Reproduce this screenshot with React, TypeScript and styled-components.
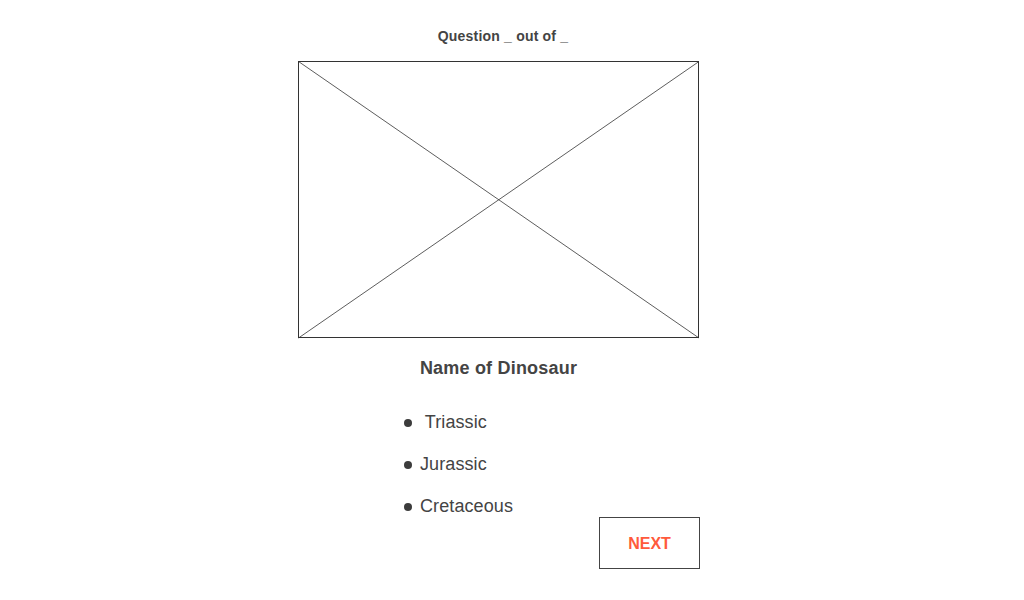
import React from "react";
import styled, { createGlobalStyle } from "styled-components";

const GlobalStyle = createGlobalStyle`
  html, body {
    margin: 0;
    padding: 0;
    background: #ffffff;
  }
  body {
    font-family: "Liberation Sans", Arial, sans-serif;
    color: #444444;
  }
`;

const Page = styled.div`
  width: 1024px;
  height: 600px;
  box-sizing: border-box;
  padding: 28px 0 0 298px;
`;

const Column = styled.div`
  width: 401px;
  display: flex;
  flex-direction: column;
`;

const Counter = styled.div`
  font-size: 14px;
  font-weight: 700;
  line-height: 16px;
  letter-spacing: 0.2px;
  text-align: center;
  padding-left: 9px;
  margin-bottom: 17px;
`;

const Placeholder = styled.div`
  position: relative;
  width: 401px;
  height: 277px;
  box-sizing: border-box;
  border: 1px solid #333333;

  svg {
    position: absolute;
    inset: -1px;
    width: calc(100% + 3px);
    height: calc(100% + 3px);
    overflow: visible;
  }
`;

const DinoName = styled.div`
  margin-top: 19px;
  font-size: 18px;
  font-weight: 700;
  line-height: 22px;
  letter-spacing: 0.2px;
  text-align: center;
`;

const Options = styled.ul`
  list-style: none;
  margin: 33px 0 0 106px;
  padding: 0;
  display: flex;
  flex-direction: column;
  gap: 21px;
`;

const Option = styled.li`
  display: flex;
  align-items: center;
  font-size: 18px;
  line-height: 21px;
  letter-spacing: 0.1px;
  white-space: pre;
`;

const Dot = styled.span`
  width: 8px;
  height: 8px;
  border-radius: 50%;
  background: #3c3c3c;
  margin-right: 8px;
  flex: none;
`;

const NextButton = styled.button`
  align-self: flex-end;
  width: 101px;
  height: 52px;
  margin: 0 -1px 0 0;
  padding: 2px 0 0;
  background: #ffffff;
  border: 1px solid #444444;
  border-radius: 0;
  color: #ff5a3c;
  font-family: "Liberation Sans", Arial, sans-serif;
  font-size: 16px;
  font-weight: 700;
  cursor: pointer;
`;

const options = [" Triassic", "Jurassic", "Cretaceous"];

export default function App() {
  return (
    <>
      <GlobalStyle />
      <Page>
        <Column>
          <Counter>Question _ out of _</Counter>
          <Placeholder>
            <svg viewBox="0 0 403 279" preserveAspectRatio="none">
              <line x1="0.5" y1="0.5" x2="402" y2="278" stroke="#333" strokeWidth="0.8" />
              <line x1="402" y1="0.5" x2="0.5" y2="278" stroke="#333" strokeWidth="0.8" />
            </svg>
          </Placeholder>
          <DinoName>Name of Dinosaur</DinoName>
          <Options>
            {options.map((o) => (
              <Option key={o}>
                <Dot />
                {o}
              </Option>
            ))}
          </Options>
          <NextButton>NEXT</NextButton>
        </Column>
      </Page>
    </>
  );
}
